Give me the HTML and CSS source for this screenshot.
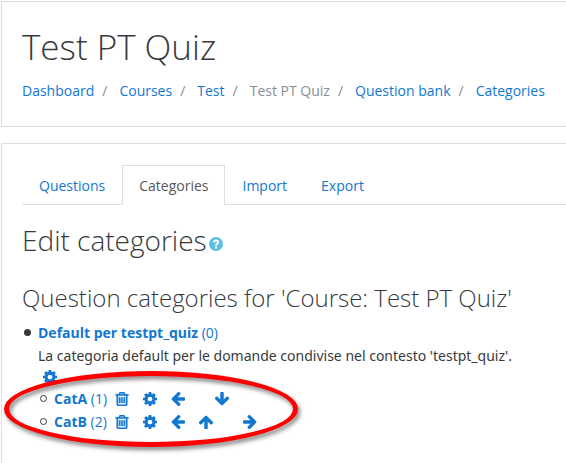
FILE: index.html
```html
<!DOCTYPE html>
<html lang="en">
<head>
  <meta charset="UTF-8">
  <meta name="viewport" content="width=device-width, initial-scale=1">
  <title>Test PT Quiz: Categories</title>
  <link rel="stylesheet" href="styles.css">
</head>
<body>
  <!-- Icon shapes -->
  <svg class="sprite" aria-hidden="true">
    <symbol id="cog" viewBox="0 128 1536 1536">
      <path d="M1024 896q0-106-75-181t-181-75-181 75-75 181 75 181 181 75 181-75 75-181zm512-109v222q0 12-8 23t-20 13l-185 28q-19 54-39 91 35 50 107 138 10 12 10 25t-9 23q-27 37-99 108t-94 71q-12 0-26-9l-138-108q-44 23-91 38-16 136-29 186-7 28-36 28h-222q-14 0-24.500-8.500t-11.500-21.500l-28-184q-49-16-90-37l-141 107q-10 9-25 9-14 0-25-11-126-114-165-168-7-10-7-23 0-12 8-23 15-21 51-66.500t54-70.500q-27-50-41-99l-183-27q-13-2-21-12.500t-8-23.500v-222q0-12 8-23t19-13l186-28q14-46 39-92-40-57-107-138-10-12-10-24 0-10 9-23 26-36 98.500-107.500t94.500-71.500q13 0 26 10l138 107q44-23 91-38 16-136 29-186 7-28 36-28h222q14 0 24.500 8.500t11.500 21.500l28 184q49 16 90 37l142-107q9-9 24-9 13 0 25 10 129 119 165 170 7 8 7 22 0 12-8 23-15 21-51 66.500t-54 70.500q26 50 41 98l183 28q13 2 21 12.500t8 23.500z"/>
    </symbol>
    <symbol id="trash" viewBox="-64 128 1536 1536">
      <path stroke="currentColor" stroke-width="60" d="M512 736v576q0 14-9 23t-23 9h-64q-14 0-23-9t-9-23v-576q0-14 9-23t23-9h64q14 0 23 9t9 23zm256 0v576q0 14-9 23t-23 9h-64q-14 0-23-9t-9-23v-576q0-14 9-23t23-9h64q14 0 23 9t9 23zm256 0v576q0 14-9 23t-23 9h-64q-14 0-23-9t-9-23v-576q0-14 9-23t23-9h64q14 0 23 9t9 23zm128 724v-948h-896v948q0 22 7 40.500t14.500 27 10.500 8.500h832q3 0 10.500-8.500t14.500-27 7-40.500zm-672-1076h448l-48-117q-7-9-17-11h-317q-10 2-17 11zm928 32v64q0 14-9 23t-23 9h-96v948q0 83-47 143.500t-113 60.500h-832q-66 0-113-58.500t-47-141.500v-952h-96q-14 0-23-9t-9-23v-64q0-14 9-23t23-9h309l70-167q15-37 54-63t79-26h320q40 0 79 26t54 63l70 167h309q14 0 23 9t9 23z"/>
    </symbol>
    <symbol id="arrow" viewBox="0 192 1536 1536">
      <path d="M1536 896v128q0 53-32.500 90.500t-84.500 37.500h-704l293 294q38 36 38 90t-38 90l-75 76q-37 37-90 37-52 0-91-37l-651-652q-37-37-37-90 0-52 37-91l651-650q38-38 91-38 52 0 90 38l75 74q38 38 38 91t-38 91l-293 293h704q52 0 84.500 37.500t32.500 90.500z"/>
    </symbol>
    <symbol id="help" viewBox="0 0 14 14">
      <circle cx="7" cy="7" r="7"/>
      <path fill="none" stroke="#fff" stroke-width="2" d="M4.700 5.200C5 3.900 5.900 3.500 7 3.500c1.300 0 2.200.7 2.200 1.700C9.200 6.700 7 6.600 7 8.500M7 9.500v2"/>
    </symbol>
  </svg>

  <header class="card page-header">
    <h1>Test PT Quiz</h1>
    <nav aria-label="Breadcrumb">
      <ol class="breadcrumb">
        <li><a href="#">Dashboard</a></li>
        <li><a href="#">Courses</a></li>
        <li><a href="#">Test</a></li>
        <li>Test PT Quiz</li>
        <li><a href="#">Question bank</a></li>
        <li><a href="#">Categories</a></li>
      </ol>
    </nav>
  </header>

  <main class="card page-content">
    <nav class="tabs">
      <a href="#">Questions</a>
      <a href="#" class="active" aria-current="page">Categories</a>
      <a href="#">Import</a>
      <a href="#">Export</a>
    </nav>

    <h2>Edit categories<a href="#" class="help" aria-label="Help"><svg class="icon"><use href="#help"/></svg></a></h2>

    <h3>Question categories for 'Course: Test PT Quiz'</h3>

    <ul class="categories">
      <li>
        <a href="#"><b>Default per testpt_quiz</b> (0)</a>
        <div class="info">La categoria default per le domande condivise nel contesto 'testpt_quiz'.</div>
        <div class="tools">
          <a href="#" aria-label="Edit"><svg class="icon"><use href="#cog"/></svg></a>
        </div>
        <div class="highlighted">
          <ul class="subcategories">
            <li>
              <div class="row">
                <a href="#" class="name"><b>CatA</b> (1)</a>
                <a href="#" aria-label="Delete"><svg class="icon"><use href="#trash"/></svg></a>
                <a href="#" aria-label="Edit"><svg class="icon"><use href="#cog"/></svg></a>
                <a href="#" aria-label="Move left"><svg class="icon"><use href="#arrow"/></svg></a>
                <span class="spacer"></span>
                <a href="#" aria-label="Move down"><svg class="icon down"><use href="#arrow"/></svg></a>
              </div>
            </li>
            <li>
              <div class="row">
                <a href="#" class="name"><b>CatB</b> (2)</a>
                <a href="#" aria-label="Delete"><svg class="icon"><use href="#trash"/></svg></a>
                <a href="#" aria-label="Edit"><svg class="icon"><use href="#cog"/></svg></a>
                <a href="#" aria-label="Move left"><svg class="icon"><use href="#arrow"/></svg></a>
                <a href="#" aria-label="Move up"><svg class="icon up"><use href="#arrow"/></svg></a>
                <span class="spacer"></span>
                <a href="#" aria-label="Move right"><svg class="icon right"><use href="#arrow"/></svg></a>
              </div>
            </li>
          </ul>
          <div class="ring"></div>
        </div>
      </li>
    </ul>
  </main>
</body>
</html>
```
FILE: styles.css
```css
body {
  display: flex;
  flex-direction: column;
  box-sizing: border-box;
  min-height: 100vh;
  margin: 0;
  padding: 1px 0 0 1px;
  font-family: "Segoe UI", "Open Sans", sans-serif;
  font-size: 14px;
  line-height: 23px;
  color: #373a3c;
  background: #fff;
}
a {
  color: #1177d1;
  text-decoration: none;
}
h1, h2, h3 {
  margin: 0;
  font-weight: 300;
}
h1 {
  font-size: 35px;
  line-height: 42px;
}
h2 {
  font-size: 28px;
  line-height: 34px;
  margin-bottom: 26px;
}
h3 {
  font-size: 24px;
  line-height: 30px;
  margin-bottom: 8px;
}
ul, ol {
  margin: 0;
  padding: 0;
  list-style: none;
}
.sprite {
  display: none;
}
.icon {
  display: block;
  width: 14px;
  height: 14px;
  fill: currentColor;
}
.up {
  transform: rotate(90deg);
}
.right {
  transform: rotate(180deg);
}
.down {
  transform: rotate(-90deg);
}

.card {
  border: 1px solid #dcdfe1;
  border-right: 0;
  padding: 21px 0 20px 20px;
}
.page-header {
  padding-top: 24px;
  margin-bottom: 16px;
}
.page-content {
  flex: 1;
  border-bottom: 0;
  padding-bottom: 0;
}

.breadcrumb {
  display: flex;
  padding: 11px 0 4px;
  white-space: nowrap;
  color: #868e96;
}
.breadcrumb li + li::before {
  content: "/";
  padding: 0 12px 0 8px;
}

.tabs {
  display: flex;
  border-bottom: 1px solid #dcdfe1;
  margin-bottom: 18px;
}
.tabs a {
  padding: 8px 16px;
  margin-bottom: -1px;
  border: 1px solid transparent;
  border-bottom: 0;
}
.tabs .active {
  color: #55595c;
  background: #fff;
  border-color: #dcdfe1;
}

.help {
  display: inline-block;
  margin-left: 2px;
  color: #5bc0de;
}

.categories li {
  position: relative;
  padding-left: 16px;
}
/* list bullets */
.categories li::before {
  content: "";
  position: absolute;
  left: 2px;
  top: 8px;
  width: 7px;
  height: 7px;
  border-radius: 50%;
  background: #373a3c;
}
.categories .subcategories li::before {
  box-sizing: border-box;
  border: 1px solid #373a3c;
  background: none;
}
.info {
  font-family: "Segoe UI", "Noto Sans", sans-serif;
}
.tools {
  display: flex;
  align-items: center;
  height: 20px;
  padding-left: 5px;
}
.row {
  display: flex;
  align-items: center;
}
.row a {
  margin-right: 14px;
}
.row .name {
  margin-right: 8px;
}
.spacer {
  width: 16px;
}

.highlighted {
  position: relative;
  width: 260px;
}
/* hand-drawn style marker around the subcategories */
.ring {
  position: absolute;
  top: -16px;
  right: 0;
  bottom: -14px;
  left: -34px;
  border: 5px solid #f00;
  border-radius: 50%;
  filter: drop-shadow(2px 3px 2px rgba(0,0,0,0.5));
  pointer-events: none;
}
```
